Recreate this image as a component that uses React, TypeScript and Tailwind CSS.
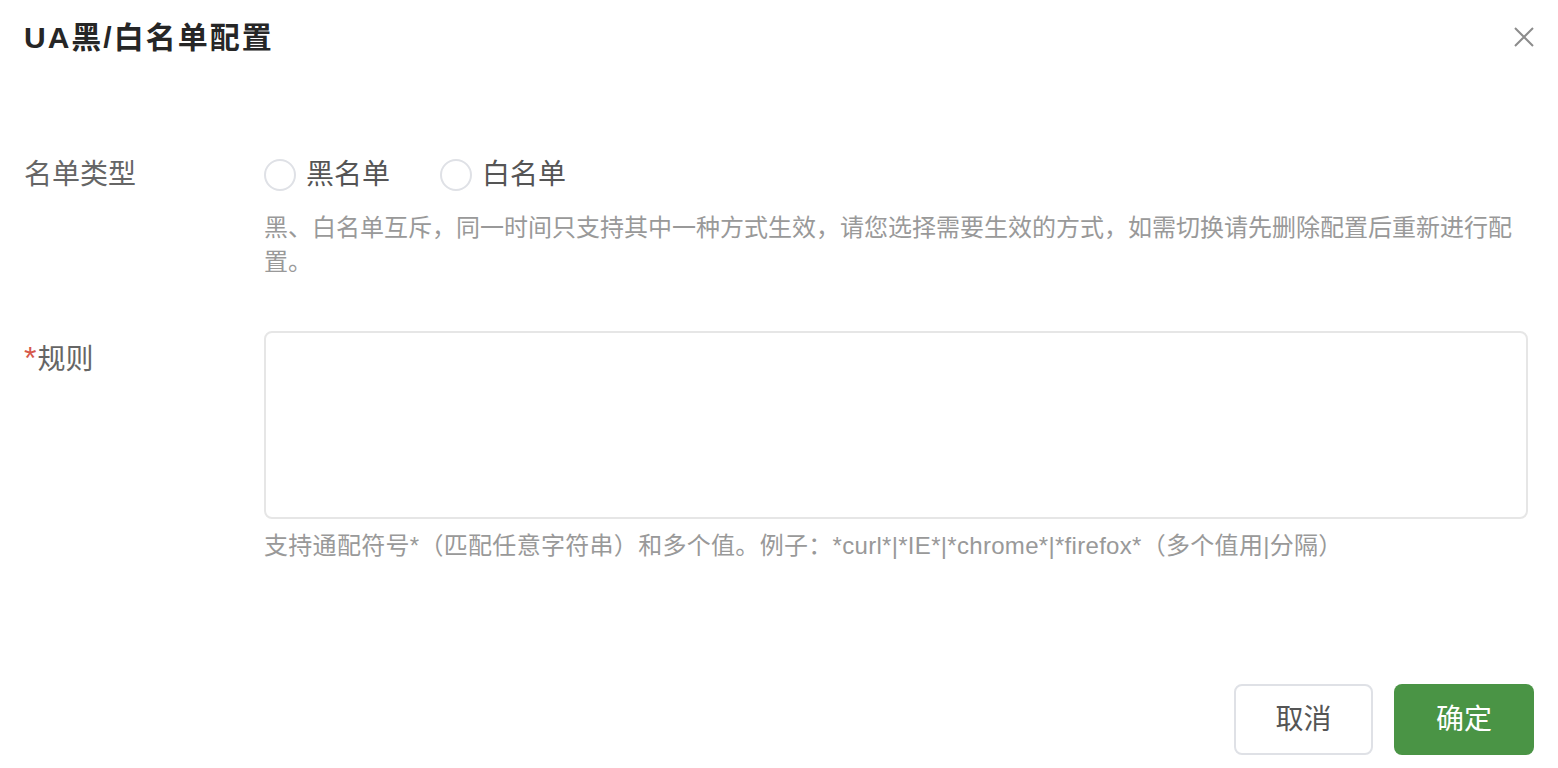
import { useState } from "react";

const FONT = {
  fontFamily: '"Liberation Sans", "Noto Sans CJK SC", sans-serif',
};

function Radio({ label, checked, onClick }: { label: string; checked: boolean; onClick: () => void }) {
  return (
    <button onClick={onClick} className="flex items-center gap-[10px] cursor-pointer">
      <span
        className={
          "w-[32px] h-[32px] rounded-full border-2 flex items-center justify-center " +
          (checked ? "border-[#4a9445]" : "border-[#dfe1e6]")
        }
      >
        {checked && <span className="w-[14px] h-[14px] rounded-full bg-[#4a9445]" />}
      </span>
      <span className="text-[28px] leading-[40px] text-[#555]">{label}</span>
    </button>
  );
}

export default function App() {
  const [type, setType] = useState<"black" | "white" | null>(null);
  const [rule, setRule] = useState("");

  return (
    <div className="w-[1558px] h-[768px] bg-white flex flex-col overflow-hidden" style={FONT}>
      {/* Header */}
      <div className="h-[74px] flex items-center justify-between pl-[24px] pr-[22px]">
        <h1 className="text-[30px] font-semibold text-[#262626] tracking-[2px]">UA黑/白名单配置</h1>
        <button aria-label="Close" className="w-[24px] h-[24px] flex items-center justify-center cursor-pointer">
          <svg width="22" height="22" viewBox="0 0 22 22" fill="none" stroke="#8c8c8c" strokeWidth="2">
            <path d="M2 2L20 20M20 2L2 20" />
          </svg>
        </button>
      </div>

      {/* Body */}
      <div className="flex flex-col pl-[24px] pr-[30px] mt-[81px]">
        {/* List type */}
        <div className="flex">
          <div className="w-[240px] shrink-0 text-[28px] leading-[40px] text-[#666]">名单类型</div>
          <div className="flex-1 flex flex-col">
            <div className="flex items-center gap-[50px]">
              <Radio label="黑名单" checked={type === "black"} onClick={() => setType("black")} />
              <Radio label="白名单" checked={type === "white"} onClick={() => setType("white")} />
            </div>
            <p className="mt-[16px] text-[24px] leading-[34px] text-[#999]">
              黑、白名单互斥，同一时间只支持其中一种方式生效，请您选择需要生效的方式，如需切换请先删除配置后重新进行配置。
            </p>
          </div>
        </div>

        {/* Rule */}
        <div className="flex mt-[52px]">
          <div className="w-[240px] shrink-0 pt-[7px] text-[28px] leading-[40px] text-[#666]">
            <span className="text-[#d6584b] text-[32px] mr-[1px]">*</span>规则
          </div>
          <div className="flex-1 flex flex-col">
            <textarea
              value={rule}
              onChange={(e) => setRule(e.target.value)}
              className="h-[188px] w-full resize-none rounded-[8px] border-2 border-[#e6e6e6] outline-none px-[14px] py-[10px] text-[24px] text-[#333]"
            />
            <p className="mt-[10px] text-[24px] leading-[34px] text-[#999] tracking-[0.3px]">
              支持通配符号*（匹配任意字符串）和多个值。例子：*curl*|*IE*|*chrome*|*firefox*（多个值用|分隔）
            </p>
          </div>
        </div>
      </div>

      {/* Footer */}
      <div className="mt-auto mb-[13px] flex justify-end gap-[21px] pr-[24px]">
        <button className="w-[139px] h-[71px] rounded-[8px] border-2 border-[#dfe1e6] bg-white text-[28px] text-[#555] cursor-pointer">
          取消
        </button>
        <button className="w-[140px] h-[71px] rounded-[8px] bg-[#4a9445] text-[28px] text-white cursor-pointer">
          确定
        </button>
      </div>
    </div>
  );
}
